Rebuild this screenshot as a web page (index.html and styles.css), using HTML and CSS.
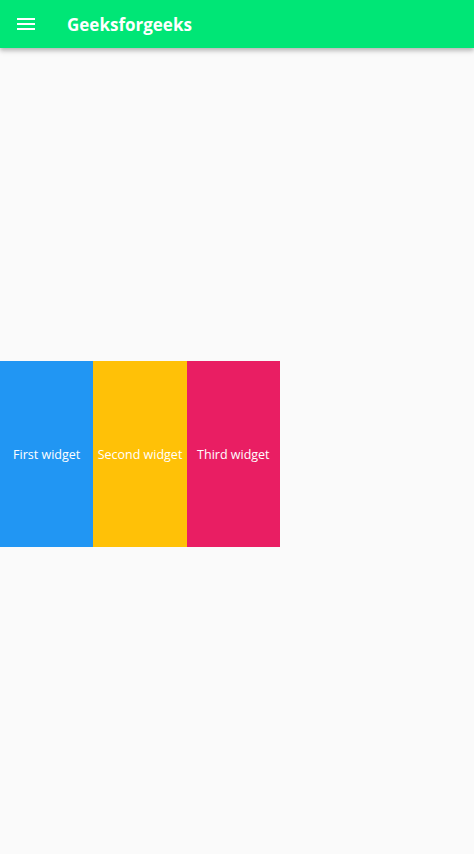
FILE: index.html
```html
<!DOCTYPE html>
<html>
<head>
<meta charset="utf-8">
<link rel="stylesheet" href="styles.css">
</head>
<body>
<header class="appbar">
  <svg class="menu" width="24" height="24" viewBox="0 0 24 24"><path d="M3 18h18v-2H3v2zm0-5h18v-2H3v2zm0-7v2h18V6H3z" fill="#fff"/></svg>
  <h1 class="title">Geeksforgeeks</h1>
</header>
<main class="content">
  <div class="row">
    <div class="box blue">First widget</div>
    <div class="box amber">Second widget</div>
    <div class="box pink">Third widget</div>
  </div>
</main>
</body>
</html>
```
FILE: styles.css
```css
html, body {
  margin: 0;
  padding: 0;
  height: 100%;
}
body {
  background: #fafafa;
  font-family: "Open Sans", "Noto Sans", sans-serif;
  display: flex;
  flex-direction: column;
}
.appbar {
  height: 48px;
  background: #00e676;
  display: flex;
  align-items: center;
  padding-left: 14px;
  box-shadow: 0 2px 4px rgba(0,0,0,0.2), 0 4px 5px rgba(0,0,0,0.1);
  position: relative;
  z-index: 1;
  flex-shrink: 0;
}
.menu {
  display: block;
}
.title {
  margin: 1px 0 0 29px;
  color: #fff;
  font-size: 17px;
  font-weight: 700;
}
.content {
  flex: 1;
  display: flex;
  align-items: center;
}
.row {
  display: flex;
  height: 186px;
  margin-top: 6px;
}
.box {
  width: 93.33px;
  display: flex;
  align-items: center;
  justify-content: center;
  color: #fff;
  font-size: 12.5px;
  white-space: nowrap;
  padding-top: 1px;
}
.blue { background: #2196f3; }
.amber { background: #ffc107; }
.pink { background: #e91e63; }
```
